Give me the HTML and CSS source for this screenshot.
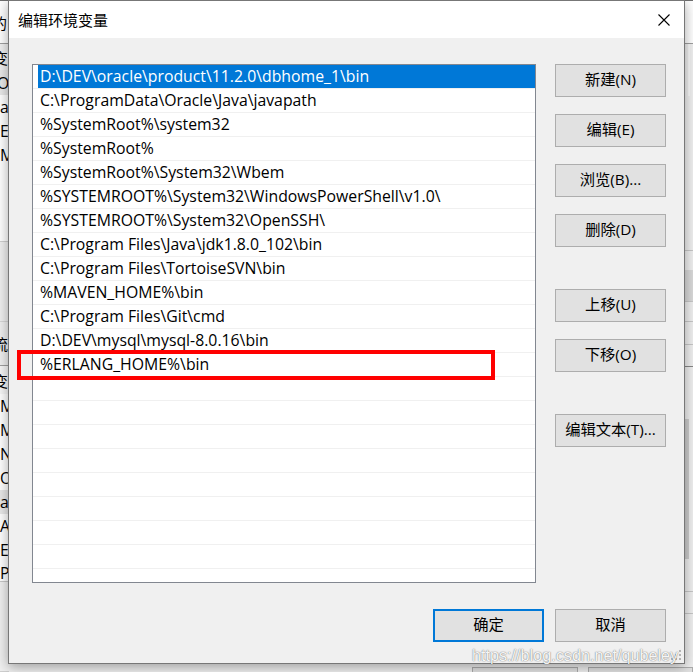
FILE: index.html
```html
<!DOCTYPE html>
<html lang="zh-CN">
<head>
<meta charset="utf-8">
<title>编辑环境变量</title>
<link rel="stylesheet" href="styles.css">
</head>
<body>
<div class="desktop">
  <div class="bg-left">
    <div class="bl bl-top"><span class="cut8">的</span></div>
    <div class="bl bl-head"><span class="cut7">变</span></div>
    <div class="bl bl-hl"><span class="cut3">Ora</span></div>
    <div class="bl bl-row"><span>a</span></div>
    <div class="bl bl-row"><span>E</span></div>
    <div class="bl bl-row"><span>M</span></div>
    <div class="bl bl-fill"></div>
    <div class="bl bl-gray"></div>
    <div class="bl bl-gray2"><span class="cut7">流</span></div>
    <div class="bl bl-head2"><span class="cut7">变</span></div>
    <div class="bl bl-row"><span>MA</span></div>
    <div class="bl bl-row"><span>MY</span></div>
    <div class="bl bl-row"><span>NU</span></div>
    <div class="bl bl-row"><span>OS</span></div>
    <div class="bl bl-row bl-sel"><span>a</span></div>
    <div class="bl bl-row"><span>A</span></div>
    <div class="bl bl-row"><span>E</span></div>
    <div class="bl bl-last"><span>P</span></div>
    <div class="bl bl-gray3"></div>
  </div>
  <div class="bg-right">
    <div class="br br-top"></div>
    <div class="br br-a"><div class="br-bar"></div></div>
    <div class="br br-b"></div>
    <div class="br br-c"></div>
    <div class="br br-d"></div>
    <div class="br br-e"></div>
    <div class="br br-f"></div>
    <div class="br br-scroll"><div class="br-thumb"></div></div>
    <div class="br br-g"></div>
    <div class="br br-h"></div>
    <div class="br br-i"></div>
  </div>
  <div class="bg-bottom">
    <div class="bg-btn"></div>
    <div class="bg-btn wide"></div>
  </div>
</div>

<div class="dialog">
  <div class="titlebar">
    <span class="title">编辑环境变量</span>
    <svg class="close" width="12" height="12" viewBox="0 0 12 12"><path d="M0.5 0.5 L11.5 11.5 M11.5 0.5 L0.5 11.5" stroke="#000" stroke-width="1.1" fill="none"/></svg>
  </div>
  <div class="body">
    <div class="main">
      <div class="list">
        <div class="row sel"><div class="cell">D:\DEV\oracle\product\11.2.0\dbhome_1\bin</div></div>
        <div class="row"><div class="cell">C:\ProgramData\Oracle\Java\javapath</div></div>
        <div class="row"><div class="cell">%SystemRoot%\system32</div></div>
        <div class="row"><div class="cell">%SystemRoot%</div></div>
        <div class="row"><div class="cell">%SystemRoot%\System32\Wbem</div></div>
        <div class="row"><div class="cell">%SYSTEMROOT%\System32\WindowsPowerShell\v1.0\</div></div>
        <div class="row"><div class="cell">%SYSTEMROOT%\System32\OpenSSH\</div></div>
        <div class="row"><div class="cell">C:\Program Files\Java\jdk1.8.0_102\bin</div></div>
        <div class="row"><div class="cell">C:\Program Files\TortoiseSVN\bin</div></div>
        <div class="row"><div class="cell">%MAVEN_HOME%\bin</div></div>
        <div class="row"><div class="cell">C:\Program Files\Git\cmd</div></div>
        <div class="row"><div class="cell">D:\DEV\mysql\mysql-8.0.16\bin</div></div>
        <div class="row"><div class="cell">%ERLANG_HOME%\bin</div></div>
        <div class="row"><div class="cell"></div></div>
        <div class="row"><div class="cell"></div></div>
        <div class="row"><div class="cell"></div></div>
        <div class="row"><div class="cell"></div></div>
        <div class="row"><div class="cell"></div></div>
        <div class="row"><div class="cell"></div></div>
        <div class="row"><div class="cell"></div></div>
        <div class="row"><div class="cell"></div></div>
        <div class="row"><div class="cell"></div></div>
      </div>
      <div class="btns">
        <button class="btn">新建(N)</button>
        <button class="btn">编辑(E)</button>
        <button class="btn">浏览(B)...</button>
        <button class="btn">删除(D)</button>
        <button class="btn gap">上移(U)</button>
        <button class="btn">下移(O)</button>
        <button class="btn gap">编辑文本(T)...</button>
      </div>
    </div>
    <div class="footer">
      <button class="btn default">确定</button>
      <button class="btn">取消</button>
    </div>
  </div>
  <svg class="grip" width="12" height="12" viewBox="0 0 12 12">
    <rect x="9" y="1" width="2" height="2" fill="#b4b4b4"/>
    <rect x="5" y="5" width="2" height="2" fill="#b4b4b4"/>
    <rect x="9" y="5" width="2" height="2" fill="#b4b4b4"/>
    <rect x="1" y="9" width="2" height="2" fill="#b4b4b4"/>
    <rect x="5" y="9" width="2" height="2" fill="#b4b4b4"/>
    <rect x="9" y="9" width="2" height="2" fill="#b4b4b4"/>
  </svg>
</div>

<div class="mark-box"></div>
<div class="watermark">https://blog.csdn.net/qubeley</div>
</body>
</html>
```

FILE: styles.css
```css
* { box-sizing: border-box; }

html, body {
  margin: 0;
  padding: 0;
}

body {
  width: 693px;
  height: 672px;
  overflow: hidden;
  position: relative;
  background: #f0f0f0;
  font-family: "Open Sans", "Noto Sans CJK SC", sans-serif;
  color: #000;
}

/* ---------- background window (desktop) ---------- */
.desktop {
  position: absolute;
  left: 0;
  top: 0;
  width: 693px;
  height: 672px;
  background: #f0f0f0;
}

.bg-left {
  position: absolute;
  left: 0;
  top: 0;
  width: 9px;
  height: 672px;
  overflow: hidden;
  display: flex;
  flex-direction: column;
  font-size: 15.8px;
}

.bl {
  display: flex;
  align-items: center;
  white-space: nowrap;
  flex: none;
}

.cut8 { margin-left: -8px; }
.cut7 { margin-left: -7px; }
.cut3 { margin-left: -3px; }

.bl-top { height: 44px; background: #fff; border-top: 1px solid #6f6f6f; border-bottom: 1px solid #a0a0a0; font-family: "Noto Sans CJK SC", sans-serif; font-size: 15px; }
.bl-head { height: 26px; background: #f0f0f0; font-family: "Noto Sans CJK SC", sans-serif; font-size: 15px; }
.bl-hl { height: 25px; background: #e9e9e9; }
.bl-row { height: 24px; background: #fff; }
.bl-sel { background: #e9e9e9; }
.bl-fill { height: 75px; background: #fff; border-bottom: 1px solid #d0d0d0; }
.bl-gray { height: 80px; background: #f0f0f0; border-bottom: 1px solid #d8d8d8; }
.bl-gray2 { height: 44px; background: #f0f0f0; border-bottom: 1px solid #a0a0a0; font-family: "Noto Sans CJK SC", sans-serif; font-size: 15px; }
.bl-head2 { height: 28px; background: #f7f7f7; font-family: "Noto Sans CJK SC", sans-serif; font-size: 15px; }
.bl-last { height: 20px; background: #fff; border-bottom: 1px solid #c8c8c8; align-items: flex-start; }
.bl-gray3 { height: 90px; background: #f0f0f0; border-top: 62px solid #f0f0f0; border-bottom: 1px solid #d0d0d0; }

.bg-right {
  position: absolute;
  left: 685px;
  top: 0;
  width: 8px;
  height: 672px;
  display: flex;
  flex-direction: column;
  overflow: hidden;
}

.br { flex: none; }
.br-top { height: 44px; background: #fff; border-top: 1px solid #6f6f6f; border-bottom: 1px solid #a0a0a0; }
.br-a { height: 207px; background: #f0f0f0; border-bottom: 1px solid #c8c8c8; }
.br-bar { width: 2px; height: 52px; margin-left: 3px; background: #fafafa; }
.br-b { height: 19px; background: #f0f0f0; }
.br-c { height: 32px; background: #dadada; border-bottom: 1px solid #c8c8c8; }
.br-d { height: 20px; background: #f0f0f0; border-bottom: 1px solid #c8c8c8; }
.br-e { height: 23px; background: #f0f0f0; border-bottom: 1px solid #c8c8c8; }
.br-f { height: 22px; background: #f0f0f0; border-bottom: 1px solid #888; }
.br-scroll { height: 208px; background: #f0f0f0; padding-top: 52px; }
.br-thumb { width: 4px; height: 140px; background: #cdcdcd; }
.br-g { height: 17px; background: #f0f0f0; border-bottom: 1px solid #c8c8c8; }
.br-h { height: 22px; background: #f0f0f0; border-bottom: 1px solid #c8c8c8; }
.br-i { height: 40px; background: #f0f0f0; }

.bg-bottom {
  position: absolute;
  left: 0;
  top: 664px;
  width: 693px;
  height: 8px;
  display: flex;
  gap: 10px;
  padding: 3px 0 0 472px;
}

.bg-btn {
  width: 111px;
  height: 20px;
  background: #e1e1e1;
  border: 1px solid #adadad;
}

/* ---------- dialog ---------- */
.dialog {
  position: absolute;
  left: 8px;
  top: 0;
  width: 677px;
  height: 664px;
  border: 1px solid #777;
  background: #f0f0f0;
  box-shadow: 0 3px 12px rgba(0, 0, 0, 0.35);
  display: flex;
  flex-direction: column;
}

.titlebar {
  flex: none;
  height: 37px;
  background: #fff;
  display: flex;
  align-items: center;
  justify-content: space-between;
  padding: 0 14px 0 9px;
}

.title {
  font-family: "Noto Sans CJK SC", sans-serif;
  font-size: 15px;
  line-height: 20px;
}

.close { display: block; }

.body {
  flex: 1;
  padding: 26px 18px 21px 23px;
  display: flex;
  flex-direction: column;
}

.main {
  display: flex;
  gap: 19px;
  height: 519px;
  flex: none;
}

.list {
  width: 504px;
  height: 519px;
  border: 1px solid #828790;
  background: #fff;
  overflow: hidden;
  flex: none;
}

.row {
  height: 24px;
  border-bottom: 1px solid #f0f0f0;
  padding-left: 5px;
}

.cell {
  height: 23px;
  line-height: 23px;
  padding-left: 2px;
  white-space: nowrap;
  font-family: "Open Sans", sans-serif;
  font-size: 15.8px;
}

.row.sel .cell {
  background: #0078d7;
  color: #fff;
}

.btns {
  width: 111px;
  display: flex;
  flex-direction: column;
  flex: none;
}

.btn {
  width: 111px;
  height: 33px;
  margin: 0;
  padding: 0 0 3px;
  background: #e1e1e1;
  border: 1px solid #adadad;
  border-radius: 0;
  font-family: "Open Sans", "Noto Sans CJK SC", sans-serif;
  font-size: 15.3px;
  line-height: 20px;
  color: #000;
  flex: none;
}

.btns .btn + .btn { margin-top: 17px; }
.btns .btn.gap { margin-top: 42px; }

.footer {
  margin-top: 26px;
  display: flex;
  justify-content: flex-end;
  gap: 11px;
  height: 33px;
  flex: none;
}

.btn.default {
  border: 2px solid #0078d7;
}

.grip {
  position: absolute;
  right: 2px;
  bottom: 2px;
}

/* ---------- overlays ---------- */
.mark-box {
  position: absolute;
  left: 17px;
  top: 350px;
  width: 478px;
  height: 30px;
  border: 4px solid #ff0000;
}

.watermark {
  position: absolute;
  left: 472px;
  top: 646px;
  font-family: "Liberation Sans", sans-serif;
  font-size: 16.2px;
  line-height: 18px;
  color: rgba(255, 255, 255, 0.95);
  text-shadow: 0 0 1px rgba(0, 0, 0, 0.55), 0 0 2px rgba(0, 0, 0, 0.2);
  white-space: nowrap;
}
```
